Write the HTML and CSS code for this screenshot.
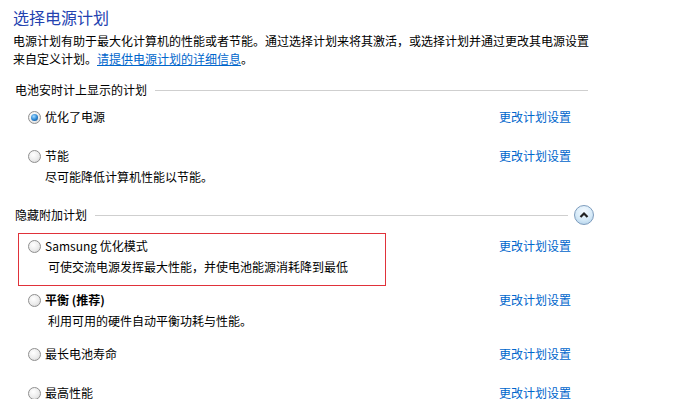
FILE: index.html
```html
<!DOCTYPE html>
<html lang="zh-CN">

<head>
    <meta charset="UTF-8">
    <meta name="viewport" content="width=device-width, initial-scale=1.0">
    <title>选择电源计划</title>
    <link rel="stylesheet" href="styles.css">
</head>

<body>
    <div class="page">
        <h1 class="title">选择电源计划</h1>
        <p class="intro">电源计划有助于最大化计算机的性能或者节能。通过选择计划来将其激活，或选择计划并通过更改其电源设置来自定义计划。<a href="#">请提供电源计划的详细信息</a>。</p>

        <!-- Plans shown on the battery meter -->
        <div class="section-head">
            <span>电池安时计上显示的计划</span>
            <span class="rule"></span>
        </div>
        <div class="plans">
            <div class="plan">
                <label class="plan-body">
                    <span class="plan-name"><input type="radio" name="plan" checked>优化了电源</span>
                </label>
                <a class="plan-link" href="#">更改计划设置</a>
            </div>
            <div class="plan">
                <label class="plan-body">
                    <span class="plan-name"><input type="radio" name="plan">节能</span>
                    <span class="plan-desc">尽可能降低计算机性能以节能。</span>
                </label>
                <a class="plan-link" href="#">更改计划设置</a>
            </div>
        </div>

        <!-- Hidden additional plans -->
        <div class="section-head">
            <span>隐藏附加计划</span>
            <span class="rule"></span>
            <button class="collapse" title="隐藏附加计划">
                <svg width="10" height="8" viewBox="0 0 10 8"><polyline points="1.5,6 5,2.5 8.5,6" fill="none" stroke="#222" stroke-width="2.2"/></svg>
            </button>
        </div>
        <div class="plans plans-extra">
            <div class="plan">
                <label class="plan-body">
                    <span class="plan-name"><input type="radio" name="plan">Samsung 优化模式</span>
                    <span class="plan-desc wide">可使交流电源发挥最大性能，并使电池能源消耗降到最低</span>
                </label>
                <a class="plan-link" href="#">更改计划设置</a>
                <span class="highlight"></span>
            </div>
            <div class="plan">
                <label class="plan-body">
                    <span class="plan-name"><input type="radio" name="plan"><b>平衡 (推荐)</b></span>
                    <span class="plan-desc wide">利用可用的硬件自动平衡功耗与性能。</span>
                </label>
                <a class="plan-link" href="#">更改计划设置</a>
            </div>
            <div class="plan">
                <label class="plan-body">
                    <span class="plan-name"><input type="radio" name="plan">最长电池寿命</span>
                </label>
                <a class="plan-link" href="#">更改计划设置</a>
            </div>
            <div class="plan">
                <label class="plan-body">
                    <span class="plan-name"><input type="radio" name="plan">最高性能</span>
                </label>
                <a class="plan-link" href="#">更改计划设置</a>
            </div>
        </div>
    </div>
</body>

</html>
```

FILE: styles.css
```css
body {
    margin: 0;
    padding: 0;
    background: #fff;
    color: #000;
    font-family: "Noto Sans CJK SC", "Noto Sans", sans-serif;
    font-size: 12px;
    line-height: 18px;
    overflow: hidden;
}

a {
    color: #0066cc;
    text-decoration: none;
}

.page {
    width: 581px;
    padding: 6px 0 0 13px;
}

.title {
    margin: 0;
    font-size: 16px;
    font-weight: normal;
    line-height: 22px;
    color: #2342b0;
}

.intro {
    margin: 4px 0 12px;
    width: 580px;
}

.intro a {
    text-decoration: underline;
}

.section-head {
    display: flex;
    align-items: center;
    height: 20px;
    margin: 4px 0 8px 2px;
}

.section-head .rule {
    flex: 1;
    border-top: 1px solid #cfcfcf;
    margin: 0 6px 0 8px;
}

.collapse {
    width: 20px;
    height: 20px;
    padding: 0;
    border: 1px solid #7d9cbd;
    border-radius: 50%;
    background: radial-gradient(circle at 50% 30%, #f4faff 0%, #d6eaf8 55%, #a9cbe6 100%);
    display: flex;
    align-items: center;
    justify-content: center;
    cursor: pointer;
}

.plans {
    padding-left: 15px;
}

.plans-extra {
    margin-top: 12px;
}

.plan {
    position: relative;
    display: grid;
    grid-template-columns: 471px auto;
    align-items: start;
    min-height: 39px;
    padding-bottom: 15px;
    box-sizing: border-box;
}

.plan-body {
    display: flex;
    flex-direction: column;
}

.plan-name {
    display: flex;
    align-items: center;
}

.plan-desc {
    margin-top: 3px;
    padding-left: 17px;
}

.plan-desc.wide {
    padding-left: 20px;
}

.plan input[type="radio"] {
    appearance: none;
    -webkit-appearance: none;
    position: relative;
    width: 13px;
    height: 13px;
    margin: 1px 4px 0 0;
    border: 1px solid #8f8f8f;
    border-radius: 50%;
    background: radial-gradient(circle at 40% 35%, #ffffff 0%, #ececec 55%, #cfcfcf 100%);
    box-sizing: border-box;
}

.plan input[type="radio"]:checked::after {
    content: "";
    position: absolute;
    left: 2px;
    top: 2px;
    width: 7px;
    height: 7px;
    border-radius: 50%;
    background: radial-gradient(circle at 40% 35%, #a6dcff 0%, #2f8ad6 50%, #0d3f78 100%);
}

.highlight {
    position: absolute;
    left: -10px;
    top: -4px;
    width: 368px;
    height: 53px;
    border: 1px solid #e0323a;
    box-sizing: border-box;
    pointer-events: none;
}
```
